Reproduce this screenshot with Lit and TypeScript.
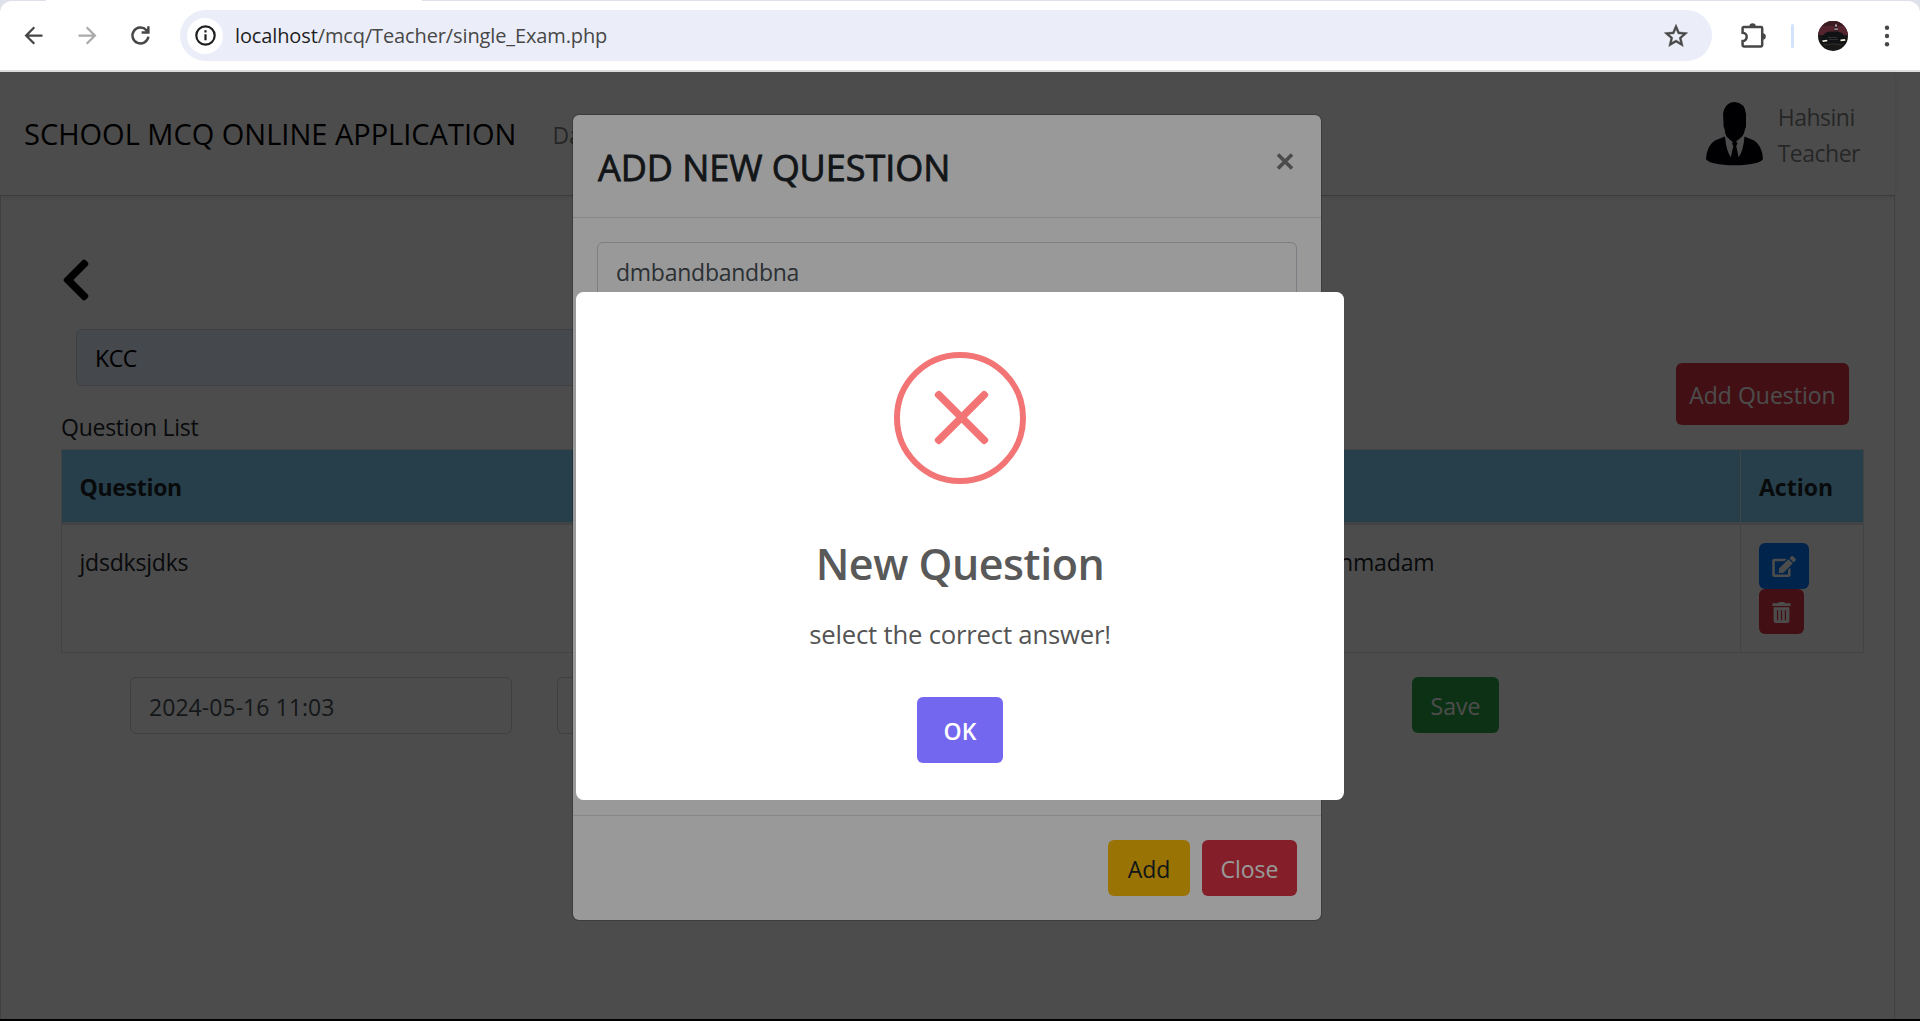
import { LitElement, html, css, svg } from 'lit';
import { customElement } from 'lit/decorators.js';

const EDIT = 'M402.6 83.2l90.2 90.2c3.8 3.8 3.8 10 0 13.8L274.4 405.6l-92.8 10.3c-12.4 1.4-22.9-9.1-21.5-21.5l10.3-92.8L388.8 83.2c3.8-3.8 10-3.8 13.8 0zm162-22.9l-48.8-48.8c-15.2-15.2-39.9-15.2-55.2 0l-35.4 35.4c-3.8 3.8-3.8 10 0 13.8l90.2 90.2c3.8 3.8 10 3.8 13.8 0l35.4-35.4c15.2-15.3 15.2-40 0-55.2zM384 346.2V448H64V128h229.8c3.2 0 6.2-1.3 8.5-3.5l40-40c7.6-7.6 2.2-20.5-8.5-20.5H48C21.5 64 0 85.5 0 112v352c0 26.5 21.5 48 48 48h352c26.5 0 48-21.5 48-48V306.2c0-10.7-12.9-16-20.5-8.5l-40 40c-2.2 2.3-3.5 5.3-3.5 8.5z';
const TRASH = 'M32 464a48 48 0 0 0 48 48h288a48 48 0 0 0 48-48V128H32zm272-256a16 16 0 0 1 32 0v224a16 16 0 0 1-32 0zm-96 0a16 16 0 0 1 32 0v224a16 16 0 0 1-32 0zm-96 0a16 16 0 0 1 32 0v224a16 16 0 0 1-32 0zM432 32H312l-9.4-18.7A24 24 0 0 0 281.1 0H166.8a23.72 23.72 0 0 0-21.4 13.3L136 32H16A16 16 0 0 0 0 48v32a16 16 0 0 0 16 16h416a16 16 0 0 0 16-16V48a16 16 0 0 0-16-16z';
const CHEVRON = 'M34.52 239.03L228.87 44.69c9.37-9.37 24.57-9.37 33.94 0l22.67 22.67c9.36 9.36 9.37 24.52.04 33.9L131.49 256l154.02 154.75c9.34 9.38 9.32 24.54-.04 33.9l-22.67 22.67c-9.37 9.37-24.57 9.37-33.94 0L34.52 272.97c-9.37-9.37-9.37-24.57 0-33.94z';
const ARROW = 'M20 11H7.83l5.59-5.59L12 4l-8 8 8 8 1.41-1.41L7.83 13H20v-2z';

@customElement('browser-bar')
export class BrowserBar extends LitElement {
  static styles = css`
    :host { display: block; flex: none; height: 72px; background: #dee1e9; }
    .tab { height: 1px; width: 376px; margin-left: 46px; background: #fff; }
    .bar {
      box-sizing: border-box; height: 71px; background: #fff; border-bottom: 2px solid #dcdee0;
      border-radius: 12px 12px 0 0; display: flex; align-items: center; padding: 0 27px 0 19.5px;
    }
    svg { display: block; flex: none; }
    .fwd { margin-left: 27px; transform: scaleX(-1); }
    .reload { margin-left: 26.5px; }
    .omni {
      margin-left: 26px; flex: 1; height: 51px; border-radius: 26px; background: #ebeef8;
      display: flex; align-items: center; box-sizing: border-box; padding: 0 22px 0 7px;
    }
    .info { width: 36px; height: 36px; border-radius: 50%; background: #fff; display: grid; place-items: center; }
    .url { margin-left: 12px; flex: 1; color: #474747; letter-spacing: -0.12px; line-height: 28px; }
    .url b { color: #1f1f1f; font-weight: 400; }
    .puzzle { margin-left: 26px; }
    .sep { width: 3px; height: 24px; border-radius: 2px; background: #d3e3fd; margin-left: 24px; }
    .photo { margin-left: 24px; }
    .dots { margin-left: 33px; }
  `;
  render() {
    return html`
      <div class="tab"></div>
      <div class="bar">
        <svg width="27" height="27" viewBox="0 0 24 24" fill="#474747"><path d=${ARROW} /></svg>
        <svg class="fwd" width="27" height="27" viewBox="0 0 24 24" fill="#ababab"><path d=${ARROW} /></svg>
        <svg class="reload" width="27" height="27" viewBox="0 0 24 24" fill="none" stroke="#474747" stroke-width="2.200">
          <path d="M19 13A7.100 7.100 0 1 1 17.200 7.200L19 9M19 3.800v5.600h-6" />
        </svg>
        <div class="omni">
          <div class="info">
            <svg width="21" height="21" viewBox="0 0 21 21">
              <circle cx="10.5" cy="10.5" r="9.200" fill="none" stroke="#1f1f1f" stroke-width="2.200" />
              <path d="M9.400 9.3h2.200v6h-2.200zM9.400 5.3h2.200v2.200h-2.200z" fill="#1f1f1f" />
            </svg>
          </div>
          <div class="url"><b>localhost</b>/mcq/Teacher/single_Exam.php</div>
          <svg width="28" height="28" viewBox="0 0 24 24" fill="#474747" stroke="#474747" stroke-width=".4">
            <path d="M22 9.240l-7.190-.620L12 2 9.190 8.630 2 9.240l5.460 4.730L5.820 21 12 17.270 18.180 21l-1.630-7.030L22 9.240zM12 15.400l-3.760 2.270 1-4.280-3.320-2.880 4.380-.380L12 6.100l1.710 4.040 4.380.380-3.320 2.880 1 4.280L12 15.400z" />
          </svg>
        </div>
        <svg class="puzzle" width="29" height="27" viewBox="0 0 29 27">
          <path d="M5.8 5h17.2q1.2 0 1.2 1.2v17.100q0 1.200-1.200 1.200H5.800q-1.200 0-1.200-1.200V19a3.900 3.900 0 0 0 0-8.200V6.200Q4.600 5 5.800 5z" fill="none" stroke="#474747" stroke-width="2.500" />
          <path d="M11.400 4.500a3.200 3.200 0 0 1 6.400 0zM24.500 11.200a3.300 3.300 0 0 1 0 6.600z" fill="#474747" />
        </svg>
        <div class="sep"></div>
        <svg class="photo" width="30" height="30" viewBox="0 0 30 30">
          <defs><clipPath id="round"><circle cx="15" cy="15" r="15" /></clipPath></defs>
          <g clip-path="url(#round)">
            <rect width="30" height="30" fill="#191817" />
            <path d="M0 0h30v14H0z" fill="#54242f" />
            <path d="M0 0h30v5H0z" fill="#3c1c23" />
            <path d="M3 18l4-6 4-1.500h8l5 1.500 4 6v4H3z" fill="#111214" />
            <path d="M16.500 5.500q1.500-4 3 0l1 5h-4z" fill="#2a2024" />
            <path d="M17 3.500h2v2h-2zM16.500 7.500h3.500v1.200h-3.500z" fill="#b9aab0" />
            <path d="M4 19.500l5-.8.5 1.600-4.500.7zM22.500 18.500l4.500-.4.500 1.700-5 .4z" fill="#f3f1df" />
            <path d="M10 16.500h9M11 18.500h9" stroke="#3c3d40" stroke-width=".7" />
            <path d="M6 24q9-2 18 0" stroke="#2d302c" fill="none" />
          </g>
        </svg>
        <svg class="dots" width="12" height="24" viewBox="0 0 12 24" fill="#474747">
          <circle cx="6" cy="3.700" r="2.200" /><circle cx="6" cy="12" r="2.200" /><circle cx="6" cy="20.300" r="2.200" />
        </svg>
      </div>`;
  }
}

@customElement('exam-page')
export class ExamPage extends LitElement {
  static styles = css`
    :host { display: flex; flex-direction: column; flex: 1; width: 1895px; background: #fff; color: #212529; }
    * { box-sizing: border-box; }
    svg { display: block; flex: none; }
    .nav {
      flex: none; height: 123px; display: flex; align-items: center; padding: 0 35px 0 24px;
      box-shadow: 0 2px 5px rgba(0, 0, 0, 0.09); position: relative; background: #fff;
    }
    .brand { font-size: 29px; color: #000; letter-spacing: 0; }
    .link { margin-left: 36px; padding-top: 2px; color: rgba(0, 0, 0, 0.5); flex: 1; }
    .who { margin: 3px 0 0 15px; line-height: 36px; color: rgba(0, 0, 0, 0.5); letter-spacing: -0.5px; }
    .person { margin-top: 1px; }
    .content { flex: 1; border: 1px solid #d3d6da; border-bottom: 0; padding: 60px 31px 0 60px; display: flex; flex-direction: column; }
    .top { display: flex; justify-content: space-between; height: 120px; margin-top: 25px; }
    .left { padding-left: 15px; }
    .box {
      height: 57px; width: 382px; border: 1px solid #ced4da; border-radius: 6px; padding: 2px 18px 0;
      display: flex; align-items: center; color: #495057; letter-spacing: 0.05px;
    }
    .subject { width: 600px; background: #e8f0fe; color: #000; padding-top: 0; letter-spacing: -0.4px; }
    .label { margin: 23px 0 0 -15px; line-height: 36px; letter-spacing: -0.25px; }
    .btn { display: flex; align-items: center; justify-content: center; padding-top: 1px; border-radius: 6px; color: #fff; }
    .red { background: #dc3545; }
    .add { width: 173px; height: 62px; margin: 34px 14px 0 0; letter-spacing: 0; }
    .table { border: 1px solid #dee2e6; width: 1803px; }
    .row { display: grid; grid-template-columns: 1258px 420px 1fr; height: 127px; }
    .row > div { padding: 19px 18px 0; line-height: 36px; border-left: 1px solid #dee2e6; }
    .row > div:first-child { border-left: 0; padding-left: 17.5px; letter-spacing: -0.2px; }
    .head { height: 75px; background: #81d4fa; border-bottom: 3px solid #dee2e6; font-weight: 700; }
    .row.head > div { padding-top: 19px; letter-spacing: -0.3px; }
    .row.head > div:last-child { letter-spacing: 0; }
    .edit { width: 50px; height: 46px; background: #007bff; margin-top: -1px; }
    .del { width: 45px; height: 45px; }
    .times { display: flex; margin: 24px 0 0 69px; gap: 45px; }
    .save { width: 87px; height: 56px; background: #28a745; margin-left: 428px; padding-top: 2px; letter-spacing: 0; }
  `;
  render() {
    return html`
      <div class="nav">
        <div class="brand">SCHOOL MCQ ONLINE APPLICATION</div>
        <div class="link">Da</div>
        <svg class="person" width="57" height="64" viewBox="0 0 57 64">
          <path d="M17 12Q19 0 29 0q10 1 11 12v9q.5 4-1 6-1 6-3.500 8l-6 5h-3l-5.500-5q-2-3-2.500-8-1.500-3-1-7z" fill="#000008" />
          <path d="M0 57Q1 43 9 38.500L19 34.500Q20 48 24.800 55.500L27.300 44 26 41.500 27.200 39.500h3L31.500 41.500 30.200 44 32.700 55.500Q37.500 48 38.500 34.500L48 38.500q8 4.500 9 18.500-4 6-28.500 6.300Q4 63 0 57z" fill="#000008" />
          <path d="M24.500 55.500h8.500v5h-8.500z" fill="#000008" />
        </svg>
        <div class="who"><div>Hahsini</div><div>Teacher</div></div>
      </div>
      <div class="content">
        <svg width="30" height="48" viewBox="0 0 320 512"><path d=${CHEVRON} /></svg>
        <div class="top">
          <div class="left">
            <div class="box subject">KCC</div>
            <div class="label">Question List</div>
          </div>
          <div class="btn red add">Add Question</div>
        </div>
        <div class="table">
          <div class="row head"><div>Question</div><div></div><div>Action</div></div>
          <div class="row">
            <div>jdsdksjdks</div>
            <div>nmadam</div>
            <div>
              <div class="btn edit"><svg width="24" height="21" viewBox="0 0 576 512" fill="#fff"><path d=${EDIT} /></svg></div>
              <div class="btn red del"><svg width="19" height="21" viewBox="0 0 448 512" fill="#fff"><path d=${TRASH} /></svg></div>
            </div>
          </div>
        </div>
        <div class="times">
          <div class="box">2024-05-16 11:03</div>
          <div class="box"></div>
          <div class="btn save">Save</div>
        </div>
      </div>`;
  }
}

@customElement('question-modal')
export class QuestionModal extends LitElement {
  static styles = css`
    * { box-sizing: border-box; }
    :host {
      position: absolute; left: 572px; top: 114px; width: 750px; height: 807px; box-sizing: border-box;
      display: flex; flex-direction: column; background: #fff; background-clip: padding-box;
      border: 1px solid rgba(0, 0, 0, 0.2); border-radius: 7px; color: #212529;
    }
    .header { display: flex; justify-content: space-between; height: 103px; padding: 24px 27px 0 25px; border-bottom: 1px solid #dee2e6; }
    .title { font-size: 36px; font-weight: 500; line-height: 58px; letter-spacing: -0.05px; -webkit-text-stroke: 0.8px #212529; }
    svg { margin-top: 14px; opacity: 0.5; }
    .body { flex: 1; padding: 24px; }
    .input { height: 57px; border: 1px solid #ced4da; border-radius: 6px; padding: 2px 18px 0; line-height: 54px; color: #495057; letter-spacing: -0.25px; }
    .footer { display: flex; justify-content: flex-end; gap: 12px; height: 105px; padding: 24px; border-top: 1px solid #dee2e6; }
    .btn { height: 56px; border-radius: 6px; display: grid; place-items: center; padding-top: 2px; letter-spacing: 0; }
    .add { width: 82px; background: #ffc107; }
    .close { width: 95px; background: #dc3545; color: #fff; }
  `;
  render() {
    return html`
      <div class="header">
        <div class="title">ADD NEW QUESTION</div>
        <svg width="18" height="17" viewBox="0 0 18 17"><path d="M2 1.500l14 14M16 1.500l-14 14" stroke="#000" stroke-width="3.600" /></svg>
      </div>
      <div class="body"><div class="input">dmbandbandbna</div></div>
      <div class="footer"><div class="btn add">Add</div><div class="btn close">Close</div></div>`;
  }
}

@customElement('alert-dialog')
export class AlertDialog extends LitElement {
  static styles = css`
    * { box-sizing: border-box; }
    :host {
      position: absolute; left: 576px; top: 292px; width: 768px; height: 508px; background: #fff;
      border-radius: 7.5px; display: flex; flex-direction: column; align-items: center; color: #545454;
    }
    svg { display: block; margin-top: 60px; }
    .title { margin-top: 50px; font-size: 43px; font-weight: 600; color: #595959; line-height: 60px; letter-spacing: -0.45px; }
    .text { margin-top: 21px; font-size: 25.700px; line-height: 40px; letter-spacing: -0.2px; }
    .ok { margin-top: 42px; width: 86px; height: 66px; border-radius: 6px; background: #7367f0; color: #fff; font-weight: 600; display: grid; place-items: center; padding-top: 2px; letter-spacing: 0; }
  `;
  render() {
    return html`
      <svg width="132" height="132" viewBox="0 0 132 132" fill="none" stroke="#f27474">
        <circle cx="66" cy="66" r="63" stroke-width="6" />
        ${svg`<g fill="#f27474" stroke="none">
          <rect x="31.750" y="61.750" width="71.500" height="7.500" rx="3" transform="rotate(45 67.500 65.500)" />
          <rect x="31.750" y="61.750" width="71.500" height="7.500" rx="3" transform="rotate(-45 67.500 65.500)" />
        </g>`}
      </svg>
      <div class="title">New Question</div>
      <div class="text">select the correct answer!</div>
      <div class="ok">OK</div>`;
  }
}

@customElement('app-root')
export class AppRoot extends LitElement {
  static styles = css`
    :host {
      display: flex; flex-direction: column; position: relative; width: 1920px; height: 1021px; overflow: hidden;
      box-sizing: border-box; border-bottom: 2px solid #000; background: #fff;
      font-family: "Open Sans", "Noto Sans", sans-serif; font-size: 23px; letter-spacing: -0.15px;
    }
    browser-bar { font-size: 20px; }
    .shade { position: absolute; inset: 72px 0 0; background: rgba(0, 0, 0, 0.5); }
    .shade.alert { background: rgba(0, 0, 0, 0.4); }
  `;
  render() {
    return html`
      <browser-bar></browser-bar>
      <exam-page></exam-page>
      <div class="shade"></div>
      <question-modal></question-modal>
      <div class="shade alert"></div>
      <alert-dialog></alert-dialog>`;
  }
}
